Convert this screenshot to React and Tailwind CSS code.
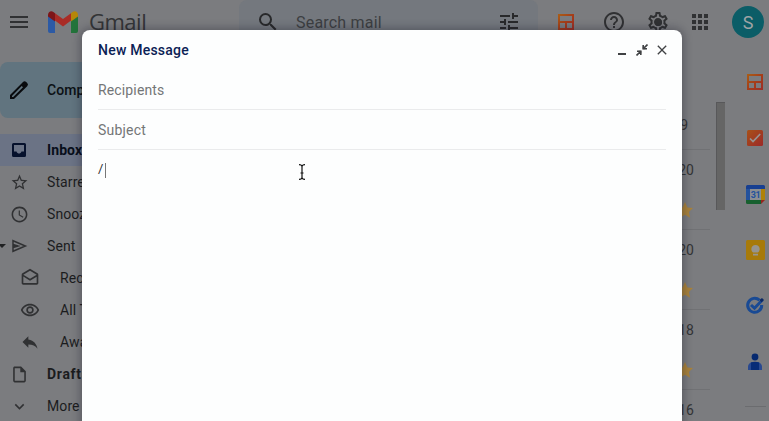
import React from "react";
import { MdSearch, MdTune, MdHelpOutline, MdApps, MdStarOutline, MdAccessTime, MdReply, MdOutlineInsertDriveFile, MdExpandMore, MdOutlineDrafts, MdOutlineRemoveRedEye, MdOutlineSettings, MdClose } from "react-icons/md";

const GmailMark = () => (
  <svg width="30" height="22" viewBox="0 0 30 22" className="shrink-0">
    <path d="M0 4v16a2 2 0 0 0 2 2h5V9.500z" fill="#2c5aa5" />
    <path d="M30 4v16a2 2 0 0 1-2 2h-5V9.500z" fill="#23733b" />
    <path d="M7 9.500V2.200L15 8l8-5.800v7.300l-8 6z" fill="#a92c26" />
    <path d="M0 4v1.500l7 5V2.200L5.400 1C3.100-.7 0 .8 0 4z" fill="#7d1518" />
    <path d="M30 4v1.500l-7 5V2.200L24.600 1C26.900-.7 30 .8 30 4z" fill="#b58709" />
  </svg>
);

const BoardIcon = ({ id }) => (
  <svg width="16" height="16" viewBox="0 0 16 16" className="shrink-0">
    <defs>
      <linearGradient id={id} x1="0" y1="0" x2="1" y2="1">
        <stop offset="0" stopColor="#a95f16" />
        <stop offset="0.5" stopColor="#a53d19" />
        <stop offset="1" stopColor="#9c2d28" />
      </linearGradient>
    </defs>
    <path fill={`url(#${id})`} fillRule="evenodd" d="M0 0h16v16H0zM2 2v5h12V2zM2 9v5h5V9zM9 9v5h5V9z" />
  </svg>
);

const InboxIcon = () => (
  <svg width="14" height="14" viewBox="0 0 14 14">
    <path fill="currentColor" fillRule="evenodd" d="M1.500 0h11A1.500 1.500 0 0 1 14 1.500v11a1.500 1.500 0 0 1-1.500 1.500h-11A1.500 1.500 0 0 1 0 12.500v-11A1.500 1.500 0 0 1 1.500 0zM2 2v6.500h2.500C5 10 6 10.500 7 10.500S9 10 9.500 8.500H12V2z" />
  </svg>
);

const SendIcon = () => (
  <svg width="18" height="18" viewBox="0 0 24 24" fill="none" stroke="currentColor" strokeWidth="2">
    <path d="M4 5v14l16.500-7zM4 12h7M4 9.800l7 2.200-7 2.200" />
  </svg>
);

const PencilIcon = () => (
  <svg width="20" height="20" viewBox="0 0 20 20" className="text-[#090b0e]">
    <path fill="currentColor" fillRule="evenodd" d="M1 15 14 2q1.500-1.700 3.200 0l1 1q1.600 1.500 0 3.200L5 19H1zm2 1v1h1.200L14 7.300 12.700 6z" />
  </svg>
);

const TickTile = () => (
  <svg width="16" height="16" viewBox="0 0 16 16">
    <defs>
      <linearGradient id="tile" x2="1" y2="1">
        <stop stopColor="#a85118" />
        <stop offset="1" stopColor="#9c2928" />
      </linearGradient>
    </defs>
    <rect width="16" height="16" rx="1.500" fill="url(#tile)" />
    <path d="m3 8.500 3 3L13.200 4" fill="none" stroke="#989492" strokeWidth="1.700" />
  </svg>
);

const CalendarIcon = () => (
  <svg width="19" height="19" viewBox="0 0 19 19">
    <path d="M1.500 0h16A1.500 1.500 0 0 1 19 1.500V5H0V1.500A1.500 1.500 0 0 1 1.500 0z" fill="#173f91" />
    <path d="M0 4h4v11H0z" fill="#24529d" />
    <path d="M15 4h4v11h-4z" fill="#b08208" />
    <path d="M0 15h15v4H1.500A1.500 1.500 0 0 1 0 17.500z" fill="#17602f" />
    <path d="M15 15h4l-4 4z" fill="#96251f" />
    <path d="M4 4h11v11H4z" fill="#8b8e92" />
    <text x="9.600" y="12.800" textAnchor="middle" fontSize="9" fontWeight="700" fontFamily="Roboto, sans-serif" letterSpacing="-0.300" fill="#24529d">31</text>
  </svg>
);

const KeepIcon = () => (
  <svg width="19" height="20" viewBox="0 0 19 20">
    <rect width="19" height="20" rx="1.500" fill="#a77a0a" />
    <path d="M7 12.500a4.200 4.200 0 1 1 5 0zM7 13.800h5v1.800H7z" fill="#96948f" />
  </svg>
);

const TasksIcon = () => (
  <svg width="20" height="20" viewBox="0 0 20 20" fill="none">
    <path d="M14.500 4.200A7 7 0 1 0 16.700 9" stroke="#194a94" strokeWidth="3" />
    <path d="m6 9 3.500 3.200 8-8.400" stroke="#194a94" strokeWidth="3" />
    <path d="m14.500 4 2.500-2 2 2-2.500 2.200z" fill="#0b2863" />
  </svg>
);

const ContactsIcon = () => (
  <svg width="16" height="18" viewBox="0 0 16 18">
    <circle cx="8" cy="4" r="3.400" fill="#06296f" />
    <path d="M5 9h6q4 1.300 4 5v3H1v-3q0-3.700 4-5z" fill="#294990" />
    <path d="M4 9.500q4-1.600 8 0V17H4z" fill="#082c77" />
  </svg>
);

const folders = [
  { label: "Inbox", icon: <InboxIcon />, active: true },
  { label: "Starred", icon: <MdStarOutline size={19} /> },
  { label: "Snoozed", icon: <MdAccessTime size={19} /> },
  { label: "Sent", icon: <SendIcon />, arrow: true },
  { label: "Received", icon: <MdOutlineDrafts size={20} />, sub: true },
  { label: "All Tracked", icon: <MdOutlineRemoveRedEye size={20} />, sub: true },
  { label: "Awaiting", icon: <MdReply size={20} />, sub: true },
  { label: "Drafts", icon: <MdOutlineInsertDriveFile size={19} />, bold: true },
  { label: "More", icon: <MdExpandMore size={19} /> },
];

function Folder({ label, icon, active, sub, bold, arrow }) {
  return (
    <li className={`flex h-8 items-center ${active ? "bg-[#6b7385] font-bold text-[#080e1a]" : "text-[#1b1c1e]"} ${bold ? "font-bold tracking-[0.7px]" : ""} ${sub ? "pl-5" : ""}`}>
      {!sub && (
        <span className="flex w-[9px] shrink-0">
          {arrow && <svg width="6" height="4" viewBox="0 0 6 4"><path d="M-2 0h8L2 4z" fill="#202123" /></svg>}
        </span>
      )}
      <span className={`flex w-5 shrink-0 justify-center ${active ? "text-[#06112c]" : "text-[#303133]"}`}>{icon}</span>
      <span className={`whitespace-nowrap text-[14px] ${sub ? "ml-5" : "ml-[18px]"}`}>{label}</span>
    </li>
  );
}

function MailRow({ date }) {
  return (
    <div className="flex h-20 shrink-0 flex-col items-end border-t border-[#707174] pr-4">
      <span className="mt-[11px] h-[18px] text-[14px] leading-[18px] text-[#333436]">{date}</span>
      <svg width="16" height="16" viewBox="0 0 24 24" className="mt-[23px] mr-px shrink-0">
        <path fill="#a8823c" d="m12 0 3.700 8.200 8.300.9-6.200 5.800 1.800 8.700L12 19.200l-7.600 4.400 1.800-8.700L0 9.100l8.300-.9z" />
      </svg>
    </div>
  );
}

function Compose() {
  return (
    <section className="absolute top-[30px] left-[82px] flex h-[410px] w-[600px] flex-col rounded-t-lg bg-[#fdfefe] px-4 shadow-[0_0_8px_2px_rgba(20,20,35,0.33)]">
      <header className="flex h-10 items-center justify-between text-[#404244]">
        <h1 className="text-[14px] font-medium tracking-[0.23px] text-[#0b2255]">New Message</h1>
        <div className="flex items-center">
          <svg width="8" height="14" viewBox="0 0 8 14" className="mr-[10px]"><path d="M0 10h8v2H0z" fill="currentColor" /></svg>
          <svg width="12" height="12" viewBox="0 0 12 12" className="mr-[6px]" fill="none" stroke="currentColor" strokeWidth="1.600">
            <path d="M7.200 1v3.800H11M7.200 4.800 11.500.5M1 7.200h3.800V11M4.800 7.200.5 11.500" />
            <path d="M6.800 2.500v2.700h2.700zM5.200 9.500V6.800H2.500z" fill="currentColor" stroke="none" />
          </svg>
          <MdClose size={16} className="mr-[-4px] stroke-current" />
        </div>
      </header>
      <div className="flex h-10 items-center border-b border-[#eaebec] pt-px text-[14px] tracking-[0.14px] text-[#747677]">Recipients</div>
      <div className="flex h-10 items-center border-b border-[#eaebec] pt-px text-[14px] tracking-[0.2px] text-[#747677]">Subject</div>
      <div className="flex h-10 items-center text-[13px] text-[#303133]">
        <span className="w-[7px] pb-[2px]">/</span>
        <span className="h-[15px] w-px bg-[#777]" />
        <svg width="8" height="16" viewBox="0 0 8 16" className="mt-1 ml-[192px]" fill="none" stroke="#111" strokeWidth="1.200">
          <path d="M1 .7q3 0 3 1.800v11q0 1.800-3 1.800M7 .7q-3 0-3 1.800v11q0 1.800 3 1.800M2.500 9h3" />
        </svg>
      </div>
    </section>
  );
}

export default function App() {
  return (
    <main className="relative flex h-[421px] w-[769px] flex-col overflow-hidden bg-[#7b7c7f] font-['Roboto',sans-serif]">
      <header className="flex h-[54px] shrink-0 items-start">
        <div className="flex h-11 w-[239px] shrink-0 items-center pl-[10px]">
          <svg width="18" height="12" viewBox="0 0 18 12"><path d="M0 0h18v2H0zM0 5h18v2H0zM0 10h18v2H0z" fill="#303133" /></svg>
          <div className="ml-5 flex items-center gap-[11px]">
            <GmailMark />
            <span className="pb-[2px] font-['Open_Sans',sans-serif] text-[22px] leading-none tracking-[-0.5px] text-[#333436]">Gmail</span>
          </div>
        </div>
        <div className="flex h-11 w-[299px] shrink-0 items-center rounded-t-lg bg-[#74787e] pr-[17px] pl-[17px] text-[#28292b]">
          <MdSearch size={24} />
          <span className="ml-4 flex-1 pt-[2px] text-[16px] tracking-[0.2px] text-[#3d3f42]">Search mail</span>
          <MdTune size={24} />
        </div>
        <div className="flex h-11 flex-1 items-center text-[#303133]">
          <span className="ml-5"><BoardIcon id="top-board" /></span>
          <MdHelpOutline size={24} className="ml-[28px]" />
          <span className="relative ml-5 flex size-6 items-center justify-center">
            <MdOutlineSettings size={24} />
            <span className="absolute size-[7px] rounded-full bg-[#303133]" />
          </span>
          <MdApps size={24} className="ml-[18px]" />
          <span className="ml-5 flex size-8 items-center justify-center rounded-full bg-[#0b5d67] text-[18px] text-[#9ea3a5]">S</span>
        </div>
      </header>
      <div className="flex min-h-0 flex-1">
        <nav className="w-[240px] shrink-0 pt-2 tracking-[0.1px]">
          <div className="flex h-14 items-center rounded-l-lg bg-[#61747f] pl-[9px] text-[#0b1014]">
            <PencilIcon />
            <span className="ml-[18px] text-[14px] font-medium">Compose</span>
          </div>
          <ul className="mt-4">{folders.map((folder) => <Folder key={folder.label} {...folder} />)}</ul>
        </nav>
        <div className="flex min-w-0 flex-1 flex-col">
          <div className="flex h-[95px] shrink-0 items-end justify-end pr-[22px] pb-[15px] text-[14px] leading-[18px] text-[#333436]">9</div>
          {["20", "20", "18", "16"].map((date, i) => <MailRow key={i} date={date} />)}
        </div>
        <div className="mr-4 ml-[6px] w-[9px] shrink-0 pt-12">
          <div className="h-[108px] border-t border-l border-[#58585a] bg-[#656565]" />
        </div>
        <aside className="flex w-7 shrink-0 flex-col items-center">
          {[<BoardIcon id="side-board" />, <TickTile />, <CalendarIcon />, <KeepIcon />, <TasksIcon />, <ContactsIcon />].map((icon, i) => (
            <div key={i} className="flex h-14 shrink-0 items-center justify-center">{icon}</div>
          ))}
          <div className="mt-4 h-px w-[21px] shrink-0 bg-[#6b6c6f]" />
        </aside>
      </div>
      <Compose />
    </main>
  );
}
